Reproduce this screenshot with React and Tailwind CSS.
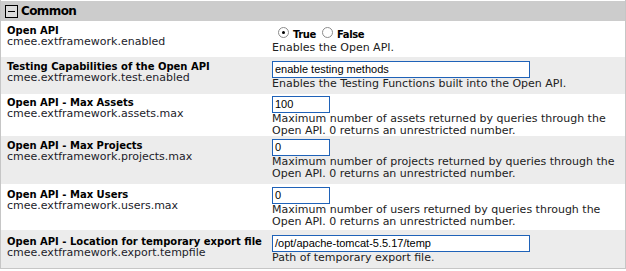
import React from "react";

const font = { fontFamily: '"DejaVu Sans", Verdana, sans-serif' };

// lp = label top padding, ip = field top padding
const rows = [
  {
    label: "Open API",
    name: "cmee.extframework.enabled",
    kind: "radio",
    desc: ["Enables the Open API."],
    h: "h-[36px]",
    bg: "bg-white",
    lp: "pt-[4px]",
    ip: "pt-[6px]",
  },
  {
    label: "Testing Capabilities of the Open API",
    name: "cmee.extframework.test.enabled",
    kind: "wide",
    value: "enable testing methods",
    desc: ["Enables the Testing Functions built into the Open API."],
    h: "h-[37px]",
    bg: "bg-[#ececec]",
    lp: "pt-[4px]",
    ip: "pt-[4px]",
  },
  {
    label: "Open API - Max Assets",
    name: "cmee.extframework.assets.max",
    kind: "short",
    value: "100",
    desc: [
      "Maximum number of assets returned by queries through the",
      "Open API. 0 returns an unrestricted number.",
    ],
    h: "h-[42px]",
    bg: "bg-white",
    lp: "pt-[3px]",
    ip: "pt-[2px]",
  },
  {
    label: "Open API - Max Projects",
    name: "cmee.extframework.projects.max",
    kind: "short",
    value: "0",
    desc: [
      "Maximum number of projects returned by queries through the",
      "Open API. 0 returns an unrestricted number.",
    ],
    h: "h-[48px]",
    bg: "bg-[#ececec]",
    lp: "pt-[4px]",
    ip: "pt-[3px]",
  },
  {
    label: "Open API - Max Users",
    name: "cmee.extframework.users.max",
    kind: "short",
    value: "0",
    desc: [
      "Maximum number of users returned by queries through the",
      "Open API. 0 returns an unrestricted number.",
    ],
    h: "h-[46px]",
    bg: "bg-white",
    lp: "pt-[5px]",
    ip: "pt-[3px]",
  },
  {
    label: "Open API - Location for temporary export file",
    name: "cmee.extframework.export.tempfile",
    kind: "wide",
    value: "/opt/apache-tomcat-5.5.17/temp",
    desc: ["Path of temporary export file."],
    h: "h-[38px]",
    bg: "bg-[#ececec]",
    lp: "pt-[6px]",
    ip: "pt-[5px]",
  },
];

function Radio({ checked }) {
  return (
    <span className="relative inline-block w-[11px] h-[11px] rounded-full border border-[#8c8c8c] bg-white mb-[2px] shrink-0">
      {checked && (
        <span className="absolute left-[3px] top-[3px] w-[3px] h-[3px] rounded-full bg-black" />
      )}
    </span>
  );
}

function Field({ row }) {
  if (row.kind === "radio") {
    return (
      <div className="flex items-end h-[13px] pl-[6px] text-[10px] font-bold text-black leading-[10px] tracking-[-0.4px]">
        <Radio checked />
        <span className="ml-[4px] mr-[6px]">True</span>
        <Radio />
        <span className="ml-[4px]">False</span>
      </div>
    );
  }
  return (
    <div
      className={`${row.kind === "wide" ? "w-[258px]" : "w-[58px]"} h-[17px] border border-[#1f62b8] bg-white px-[2px] text-[11px] leading-[15px] text-black`}
      style={{ fontFamily: '"Liberation Sans", Arial, sans-serif' }}
    >
      {row.value}
    </div>
  );
}

export default function App() {
  return (
    <div className="w-[626px] bg-white" style={font}>
      <div className="border-l border-r border-b border-[#c6c6c6] w-[626px]">
        <div className="flex items-center h-[21px] bg-[#cccccc] border-t border-white pl-[4px]">
          <span className="relative w-[13px] h-[13px] border border-black bg-[#dcdcdc]">
            <span className="absolute left-[2px] right-[2px] top-[5px] h-[1px] bg-black" />
          </span>
          <span className="ml-[3px] text-[12px] font-bold text-black tracking-[-0.6px]">Common</span>
        </div>
        {rows.map((r, i) => (
          <div key={i} className={`flex ${r.h} ${r.bg}`}>
            <div className={`w-[271px] pl-[6px] ${r.lp} whitespace-nowrap`}>
              <div className="text-[10px] leading-[11px] font-bold text-black">{r.label}</div>
              <div className="text-[11px] leading-[12px] text-[#1c1c2a]">{r.name}</div>
            </div>
            <div className={`flex-1 ${r.ip}`}>
              <Field row={r} />
              <div className={`${r.kind === "radio" ? "mt-[2px]" : ""} text-[11px] leading-[12px] text-[#222] whitespace-nowrap`}>
                {r.desc.map((d, j) => (
                  <div key={j}>{d}</div>
                ))}
              </div>
            </div>
          </div>
        ))}
      </div>
    </div>
  );
}
